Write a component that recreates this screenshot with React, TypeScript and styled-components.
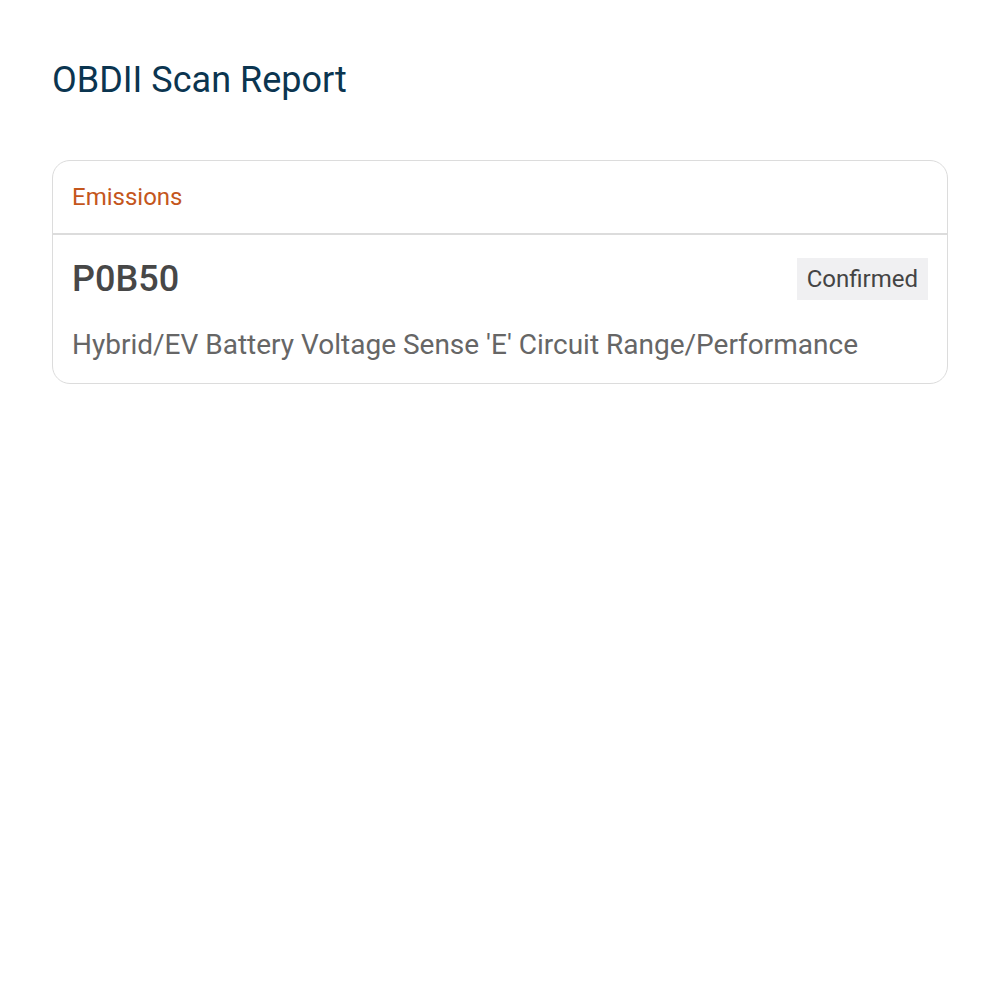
import styled, { createGlobalStyle } from 'styled-components';

type Fault = {
  code: string;
  status: string;
  description: string;
};

const faults: Fault[] = [
  {
    code: 'P0B50',
    status: 'Confirmed',
    description: "Hybrid/EV Battery Voltage Sense 'E' Circuit Range/Performance",
  },
];

const GlobalStyle = createGlobalStyle`
  body {
    margin: 0;
    background: #ffffff;
    font-family: Roboto, "Liberation Sans", sans-serif;
  }
`;

export default function App() {
  return (
    <>
      <GlobalStyle />
      <Page>
        <Title>OBDII Scan Report</Title>
        <Card>
          <CardHeader>Emissions</CardHeader>
          {faults.map((fault) => (
            <FaultRow key={fault.code}>
              <FaultTop>
                <Code>{fault.code}</Code>
                <Badge>{fault.status}</Badge>
              </FaultTop>
              <Description>{fault.description}</Description>
            </FaultRow>
          ))}
        </Card>
      </Page>
    </>
  );
}

const Page = styled.div`
  display: flex;
  flex-direction: column;
  padding: 56px 52px;
`;

const Title = styled.h1`
  margin: 0 0 56px;
  font-size: 36px;
  font-weight: 400;
  line-height: 48px;
  color: #0b3550;
`;

const Card = styled.div`
  display: flex;
  flex-direction: column;
  border: 1px solid #dcdcdc;
  border-radius: 18px;
  overflow: hidden;
`;

const CardHeader = styled.div`
  padding: 0 19px;
  height: 72px;
  display: flex;
  align-items: center;
  font-size: 24px;
  color: #c4561c;
  border-bottom: 2px solid #dcdcdc;
`;

const FaultRow = styled.div`
  display: flex;
  flex-direction: column;
  padding: 22px 19px 20px 19px;
`;

const FaultTop = styled.div`
  display: flex;
  align-items: center;
  justify-content: space-between;
`;

const Code = styled.div`
  font-size: 36px;
  font-weight: 500;
  line-height: 44px;
  color: #474747;
`;

const Badge = styled.span`
  padding: 0 10px;
  height: 42px;
  display: flex;
  align-items: center;
  font-size: 24px;
  color: #444444;
  background: #f0f0f2;
`;

const Description = styled.div`
  margin-top: 26px;
  font-size: 28px;
  line-height: 36px;
  color: #666666;
`;
